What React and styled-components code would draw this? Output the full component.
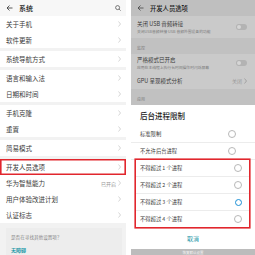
import React from "react"
import styled, { createGlobalStyle } from "styled-components"

const GlobalStyle = createGlobalStyle`
  body {
    margin: 0;
    background: #fff;
    font-family: "Noto Sans CJK SC", "Noto Sans", sans-serif;
  }
`

const Screen = styled.div`
  display: flex;
  gap: 5px;
  width: 255px;
  height: 255px;
  overflow: hidden;
`

const Phone = styled.div`
  width: ${p => p.$w}px;
  flex-shrink: 0;
  height: 255px;
  background: ${p => p.$bg};
  display: flex;
  flex-direction: column;
  overflow: hidden;
`

const Header = styled.div`
  height: 16px;
  flex-shrink: 0;
  display: flex;
  align-items: center;
  gap: 6px;
  padding: 0 5px 0 6px;
  background: ${p => p.$bg || "transparent"};
  font-size: ${p => p.$size || 7}px;
  color: #222;
`

const Title = styled.span`
  flex: 1;
  font-weight: 500;
`

const Group = styled.div`
  background: #fff;
  margin-top: ${p => (p.$first ? 0 : 3)}px;
`

const Row = styled.div`
  height: 16px;
  display: flex;
  align-items: center;
  padding: 0 5px 0 6px;
  font-size: 6.5px;
  color: #3a3a3a;
  box-shadow: ${p => (p.$mark ? "inset 0 0 0 1.6px #e1262d" : "none")};
`

const Label = styled.span`
  flex: 1;
`

const Value = styled.span`
  color: #999;
  font-size: 5px;
  margin-right: 2px;
`

const Hint = styled.div`
  margin: 5px 4px 0 6px;
  background: #ededed;
  padding: 6px 5px 6px;
  flex: 1;
`

const HintText = styled.div`
  font-size: 4.6px;
  color: #888;
`

const HintLink = styled.div`
  margin-top: 6px;
  font-size: 5px;
  font-weight: 700;
  color: #1a99a8;
`

const DimRow = styled.div`
  min-height: ${p => p.$h || 16}px;
  display: flex;
  align-items: center;
  padding: 0 8px 0 6px;
  background: #cacaca;
`

const DimText = styled.div`
  flex: 1;
  font-size: 5.5px;
  color: #3a3a3a;
`

const DimSub = styled.div`
  font-size: 3.8px;
  color: #7a7a7a;
  margin-top: 1px;
`

const Section = styled.div`
  height: ${p => p.$h}px;
  display: flex;
  align-items: flex-end;
  padding: 0 6px 3px;
  font-size: 4px;
  color: #808080;
  background: #c1c1c1;
`

const Toggle = styled.div`
  width: 11px;
  height: 6px;
  border-radius: 3px;
  background: #b3b3b3;
  display: flex;
  align-items: center;
  padding: 0 1px;
  box-sizing: border-box;
  &::before {
    content: "";
    width: 4px;
    height: 4px;
    border-radius: 50%;
    background: #d6d6d6;
  }
`

const Dialog = styled.div`
  background: #fff;
  display: flex;
  flex-direction: column;
  flex: 1;
`

const DialogTitle = styled.div`
  height: 21px;
  display: flex;
  align-items: center;
  padding: 0 9px;
  font-size: 7.5px;
  font-weight: 500;
  color: #222;
`

const Marked = styled.div`
  margin: 0 6px 0 5px;
  box-shadow: 0 0 0 1.6px #e1262d;
`

const Option = styled.div`
  height: 16px;
  display: flex;
  align-items: center;
  padding: 0 ${p => (p.$inset ? 3 : 9)}px 0 ${p => (p.$inset ? 4 : 9)}px;
  font-size: 5.3px;
  color: #3a3a3a;
  border-bottom: 0.5px solid #ececec;
  &:last-child {
    border-bottom: none;
  }
`

const Radio = styled.span`
  width: ${p => (p.$on ? 5 : 6)}px;
  height: ${p => (p.$on ? 5 : 6)}px;
  border-radius: 50%;
  box-sizing: content-box;
  border: ${p => (p.$on ? "1.8px solid #1b8fd5" : "0.6px solid #b8b8b8")};
  margin-right: ${p => (p.$inset ? 4 : 10)}px;
`

const Cancel = styled.div`
  height: 22px;
  display: flex;
  align-items: center;
  justify-content: center;
  font-size: 6px;
  color: #1f97a8;
  margin-top: auto;
`

const BottomBar = styled.div`
  height: 7px;
  background: #bcbcbc;
  display: flex;
  align-items: center;
  justify-content: center;
  font-size: 3.5px;
  color: #f4f4f4;
`

const Chevron = ({ color = "#bbb" }) => (
  <svg width="3" height="6" viewBox="0 0 3 6">
    <polyline points="0.5,0.5 2.5,3 0.5,5.5" fill="none" stroke={color} strokeWidth="0.6" />
  </svg>
)

const Back = ({ color = "#333" }) => (
  <svg width="7" height="6" viewBox="0 0 7 6">
    <path d="M6.5 3H1M3.5 0.5L1 3l2.5 2.5" fill="none" stroke={color} strokeWidth="0.8" />
  </svg>
)

const Search = () => (
  <svg width="6" height="6" viewBox="0 0 6 6">
    <circle cx="2.6" cy="2.6" r="2" fill="none" stroke="#444" strokeWidth="0.7" />
    <path d="M4.1 4.1L5.6 5.6" stroke="#444" strokeWidth="0.7" />
  </svg>
)

const groups = [
  ["关于手机", "软件更新"],
  ["系统导航方式"],
  ["语言和输入法", "日期和时间"],
  ["手机克隆", "重置"],
  ["简易模式"],
]

const limits = ["不得超过 1 个进程", "不得超过 2 个进程", "不得超过 3 个进程", "不得超过 4 个进程"]

const App = () => {
  return (
    <Screen>
      <GlobalStyle />
      <Phone $w={126} $bg="#f2f2f2">
        <Header $bg="#f7f7f7">
          <Back />
          <Title>系统</Title>
          <Search />
        </Header>
        {groups.map((g, i) => (
          <Group key={i} $first={i === 0}>
            {g.map(name => (
              <Row key={name}>
                <Label>{name}</Label>
                <Chevron />
              </Row>
            ))}
          </Group>
        ))}
        <Group>
          <Row $mark>
            <Label>开发人员选项</Label>
            <Chevron />
          </Row>
          <Row>
            <Label>华为智慧能力</Label>
            <Value>已开启</Value>
            <Chevron />
          </Row>
          <Row>
            <Label>用户体验改进计划</Label>
            <Chevron />
          </Row>
          <Row>
            <Label>认证标志</Label>
            <Chevron />
          </Row>
        </Group>
        <Hint>
          <HintText>是否在寻找其他设置项？</HintText>
          <HintLink>无障碍</HintLink>
        </Hint>
      </Phone>

      <Phone $w={124} $bg="#c4c4c4">
        <Header $bg="#bfbfbf" $size={6.3}>
          <Back color="#444" />
          <Title>开发人员选项</Title>
        </Header>
        <DimRow $h={22}>
          <DimText>
            关闭 USB 音频转接
            <DimSub>关闭USB音频转接 USB 音频外围设备的功能</DimSub>
          </DimText>
          <Toggle />
        </DimRow>
        <Section $h={15}>监控</Section>
        <DimRow $h={19}>
          <DimText>
            严格模式已开启
            <DimSub>应用在主线程上执行长时间操作时闪烁屏幕</DimSub>
          </DimText>
          <Toggle />
        </DimRow>
        <DimRow $h={16}>
          <DimText>GPU 呈现模式分析</DimText>
          <Value>关闭</Value>
          <Chevron color="#888" />
        </DimRow>
        <Section $h={16}>应用</Section>
        <Dialog>
          <DialogTitle>后台进程限制</DialogTitle>
          <Option>
            <Label>标准限制</Label>
            <Radio />
          </Option>
          <Option>
            <Label>不允许后台进程</Label>
            <Radio />
          </Option>
          <Marked>
            {limits.map((t, i) => (
              <Option key={t} $inset>
                <Label>{t}</Label>
                <Radio $on={i === 2} $inset />
              </Option>
            ))}
          </Marked>
          <Cancel>取消</Cancel>
        </Dialog>
        <BottomBar>恢复默认设置</BottomBar>
      </Phone>
    </Screen>
  )
}

export default App
